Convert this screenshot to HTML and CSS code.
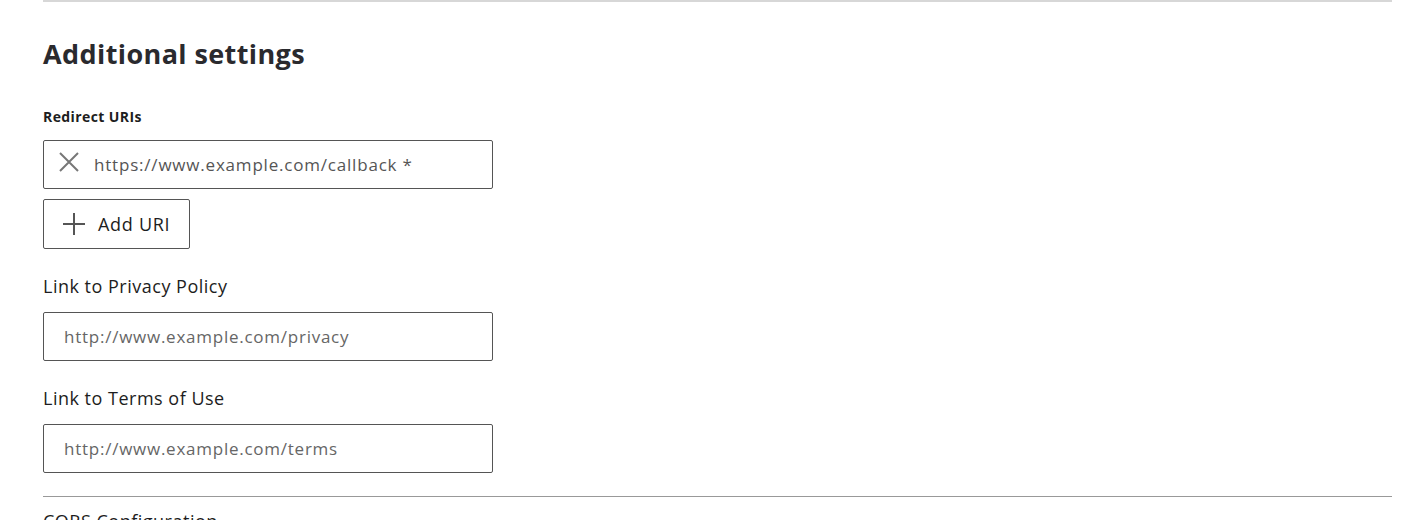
FILE: index.html
```html
<!DOCTYPE html>
<html lang="en">
<head>
    <meta charset="UTF-8">
    <title>Additional settings</title>
    <link rel="stylesheet" href="styles.css">
</head>
<body>
    <div class="page">
        <section class="section">
            <h2>Additional settings</h2>

            <div class="field">
                <label class="small-label">Redirect URIs</label>
                <div class="uri-box">
                    <button class="icon-btn" aria-label="Remove">
                        <svg width="22" height="22" viewBox="0 0 22 22"><path d="M2 2 L20 20 M20 2 L2 20" stroke="#777" stroke-width="2" fill="none"/></svg>
                    </button>
                    <span class="uri-text">https://www.example.com/callback *</span>
                </div>
                <button class="add-btn">
                    <svg width="24" height="24" viewBox="0 0 24 24"><path d="M12 1 V23 M1 12 H23" stroke="#555" stroke-width="2" fill="none"/></svg>
                    <span>Add URI</span>
                </button>
            </div>

            <div class="field">
                <label class="label">Link to Privacy Policy</label>
                <input class="text-input" type="text" placeholder="http://www.example.com/privacy">
            </div>

            <div class="field">
                <label class="label">Link to Terms of Use</label>
                <input class="text-input" type="text" placeholder="http://www.example.com/terms">
            </div>
        </section>

        <section class="section next">
            <h3>CORS Configuration</h3>
        </section>
    </div>
</body>
</html>
```

FILE: styles.css
```css
body { margin: 0; font-family: "Open Sans", Lato, sans-serif; color: #1d1d21; background: #fff; }
.page { padding: 0 34px 0 43px; }
.section { border-top: 2px solid #d7d7d7; padding-top: 34px; padding-bottom: 23px; }
.section.next { border-top: 1px solid #999; padding-top: 12px; padding-bottom: 0; }
h2 { margin: 0 0 36px; font-size: 27px; font-weight: 700; color: #2a2a2e; line-height: 36px; letter-spacing: 0.4px; }
h3 { margin: 0; font-size: 18px; font-weight: 400; line-height: 24px; letter-spacing: 0.5px; }
.field { margin-bottom: 25px; }
.field:last-child { margin-bottom: 0; }
.small-label { display: block; font-size: 14px; font-weight: 700; margin-bottom: 14px; line-height: 18px; letter-spacing: 0.4px; }
.label { display: block; font-size: 18px; margin-bottom: 14px; line-height: 24px; letter-spacing: 0.5px; }
.uri-box { width: 450px; height: 49px; box-sizing: border-box; border: 1px solid #555; border-radius: 2px; display: flex; align-items: center; padding-left: 14px; gap: 14px; }
.icon-btn { background: none; border: none; padding: 0; margin-top: -6px; display: flex; cursor: pointer; }
.uri-text { font-size: 17px; color: #555; letter-spacing: 0.8px; }
.add-btn { margin-top: 10px; height: 50px; width: 147px; box-sizing: border-box; border: 1px solid #555; border-radius: 2px; background: #fff; display: flex; align-items: center; gap: 12px; padding: 0 0 0 18px; font-family: inherit; font-size: 18px; color: #1d1d21; cursor: pointer; letter-spacing: 0.7px; }
.text-input { width: 450px; height: 49px; box-sizing: border-box; border: 1px solid #555; border-radius: 2px; padding: 0 20px; font-family: inherit; font-size: 17px; color: #1d1d21; letter-spacing: 0.75px; }
.text-input::placeholder { color: #666; }
```
